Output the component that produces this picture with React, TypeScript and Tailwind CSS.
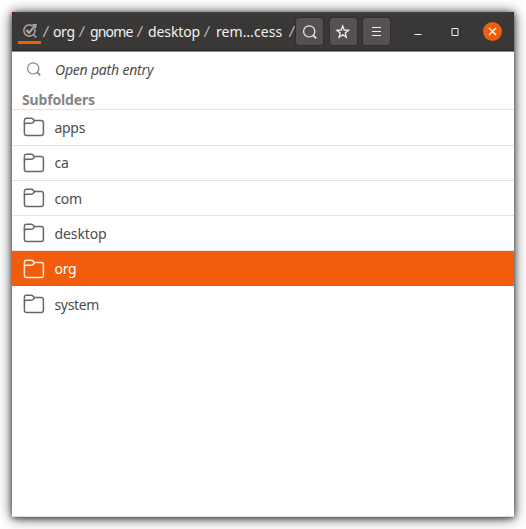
import React from 'react';

const SlashMark = ({ className }: { className: string }) => (
  <span className={`shrink-0 text-center text-[#b9b6b2] ${className}`}>
    <span className="inline-block -skew-x-6 text-[15px]">/</span>
  </span>
);

const SearchIcon = ({ className }: { className: string }) => (
  <svg viewBox="0 0 16 16" className={`h-4 w-4 shrink-0 ${className}`} fill="none" stroke="currentColor" strokeWidth="1.2">
    <circle cx="7.2" cy="7.4" r="5.6" />
    <path d="M11.2 11.4 14.2 14.4" strokeWidth="1.5" />
  </svg>
);

const FolderIcon = ({ className }: { className: string }) => (
  <svg viewBox="0 0 22 20" className={`h-5 w-[22px] shrink-0 ${className}`} fill="none" stroke="currentColor" strokeWidth="1.5" strokeLinejoin="round">
    <path d="M1.4 4.2V16.3Q1.4 18.6 3.7 18.6H18.1Q20.4 18.6 20.4 16.3V5.8Q20.4 3.6 18.1 3.6H11.2" />
    <path d="M1.4 4.2V3.4Q1.4 1.2 3.6 1.2H8.3Q9.3 1.2 10 2L11.4 3.7 10 5.4Q9.3 6.2 8.3 6.2H3.2Q1.4 6.2 1.4 8" />
  </svg>
);

const HeaderButton = ({ children }: { children: React.ReactNode }) => (
  <button className="flex h-[27px] w-[27px] shrink-0 items-center justify-center rounded-[3px] bg-[#555152] text-[#efeeed] shadow-[0_0_1px_1px_#302e2e]">
    {children}
  </button>
);

const folders = [
  { name: 'apps', spacing: 'tracking-[-0.3px]', height: 'h-[35.5px]' },
  { name: 'ca', spacing: 'tracking-[-0.3px]', height: 'h-[35.5px]' },
  { name: 'com', spacing: 'tracking-[-0.4px]', height: 'h-[35px]' },
  { name: 'desktop', spacing: 'tracking-[-0.1px]', height: 'h-[35px]' },
  { name: 'org', spacing: 'tracking-[-0.25px]', height: 'h-[35px]' },
  { name: 'system', spacing: 'tracking-[-0.35px]', height: 'h-[36px]' },
];

export default function App() {
  return (
    <div className="h-[529px] w-[526px] overflow-hidden bg-white p-3 font-['Noto_Sans','Open_Sans',sans-serif] text-[14px]">
      <div className="h-[505px] w-[502px] bg-[#65103f] shadow-[0_1px_6px_rgba(0,0,0,0.6),0_1px_13px_rgba(0,0,0,0.65)]">
        <header className="flex h-[40px] items-center rounded-t-[5px] border-b border-[#8b8989] bg-[#3a3737] text-[#f3f1ef] shadow-[inset_0_1px_0_#4b4146,inset_0_-1px_0_#292727]">
          <div className="ml-1.5 flex h-full w-[23px] shrink-0 flex-col items-center pt-[11px]">
            <svg viewBox="0 0 16 16" className="h-4 w-4" fill="none" stroke="#aaa7a5" strokeWidth="1.5">
              <path d="M10.6 2.9A5.6 5.6 0 1 0 12.7 9.4M11 11.2 14.2 14.4" />
              <path d="m4.4 7 2.6 2.8 6-7.2" strokeWidth="2.1" />
              <path d="M10.2 2 14 1.6 13.4 5.2M12.8 5.7V9.6" />
            </svg>
            <div className="mt-[2px] h-[2.5px] w-[23px] bg-[#f15d0a]" />
          </div>
          <SlashMark className="w-[10px]" />
          <span className="w-[25px] pl-[2px] tracking-[-0.35px]">org</span>
          <SlashMark className="w-[12px]" />
          <span className="w-[45px] pl-[2px] tracking-[-0.85px]">gnome</span>
          <SlashMark className="w-[13px]" />
          <span className="w-[54px] pl-[2px] tracking-[-0.1px]">desktop</span>
          <SlashMark className="w-[13px]" />
          <span className="w-[74px] pl-[3px] whitespace-nowrap tracking-[0.1px]">rem…cess</span>
          <SlashMark className="w-[9px]" />
          <div className="flex gap-[6.5px]">
            <HeaderButton><SearchIcon className="" /></HeaderButton>
            <HeaderButton>
              <svg viewBox="0 0 16 16" className="h-4 w-4" fill="none" stroke="currentColor" strokeWidth="1.3">
                <path d="m7.7 2 1.5 4 4.3.2-3.3 2.7 1.1 4.3-3.6-2.4-3.6 2.4 1.1-4.3L1.9 6.2 6.2 6Z" />
              </svg>
            </HeaderButton>
            <HeaderButton>
              <svg viewBox="0 0 16 16" className="h-4 w-4 shrink-0" fill="none" stroke="currentColor" shapeRendering="crispEdges">
                <path d="M3 3.5H12M3 7.5H12M3 11.5H12" />
              </svg>
            </HeaderButton>
          </div>
          <svg viewBox="0 0 8 8" className="ml-[24px] h-2 w-2 shrink-0"><path d="M.5 6.5H7.5" stroke="#efeeed" /></svg>
          <svg viewBox="0 0 8 8" className="ml-[29px] h-2 w-2 shrink-0"><path d="M1 .5H7V7.5H1Z" fill="none" stroke="#efeeed" /></svg>
          <div className="ml-[24px] flex h-[19px] w-[19px] shrink-0 items-center justify-center rounded-full bg-[#f15d0a]">
            <svg viewBox="0 0 9 9" className="h-[9px] w-[9px]"><path d="m1 1 7 7M8 1 1 8" stroke="#fff" strokeWidth="1.3" /></svg>
          </div>
        </header>
        <main className="flex h-[465px] flex-col border-b border-[#dedede] bg-white text-[#4c4c4c]">
          <div className="flex h-[34px] shrink-0 items-center pl-[14px]">
            <SearchIcon className="text-[#808080]" />
            <span className="ml-[13px] italic tracking-[-0.2px]">Open path entry</span>
          </div>
          <h2 className="flex h-[24px] shrink-0 items-center border-b border-[#e3e3e3] pt-[3px] pl-[10px] font-bold tracking-[-0.15px] text-[#858585]">Subfolders</h2>
          <ul className="shrink-0">
            {folders.map(({ name, spacing, height }) => (
              <li
                key={name}
                className={`flex items-center pl-[11px] ${height} ${name === 'org' ? 'bg-[#f15d0a] text-white' : name === 'system' ? '' : 'border-b border-[#e3e3e3]'}`}
              >
                <FolderIcon className={name === 'org' ? 'text-[#ffe9dc]' : 'text-[#666]'} />
                <span className={`ml-[9.5px] ${spacing}`}>{name}</span>
              </li>
            ))}
          </ul>
        </main>
      </div>
    </div>
  );
}
